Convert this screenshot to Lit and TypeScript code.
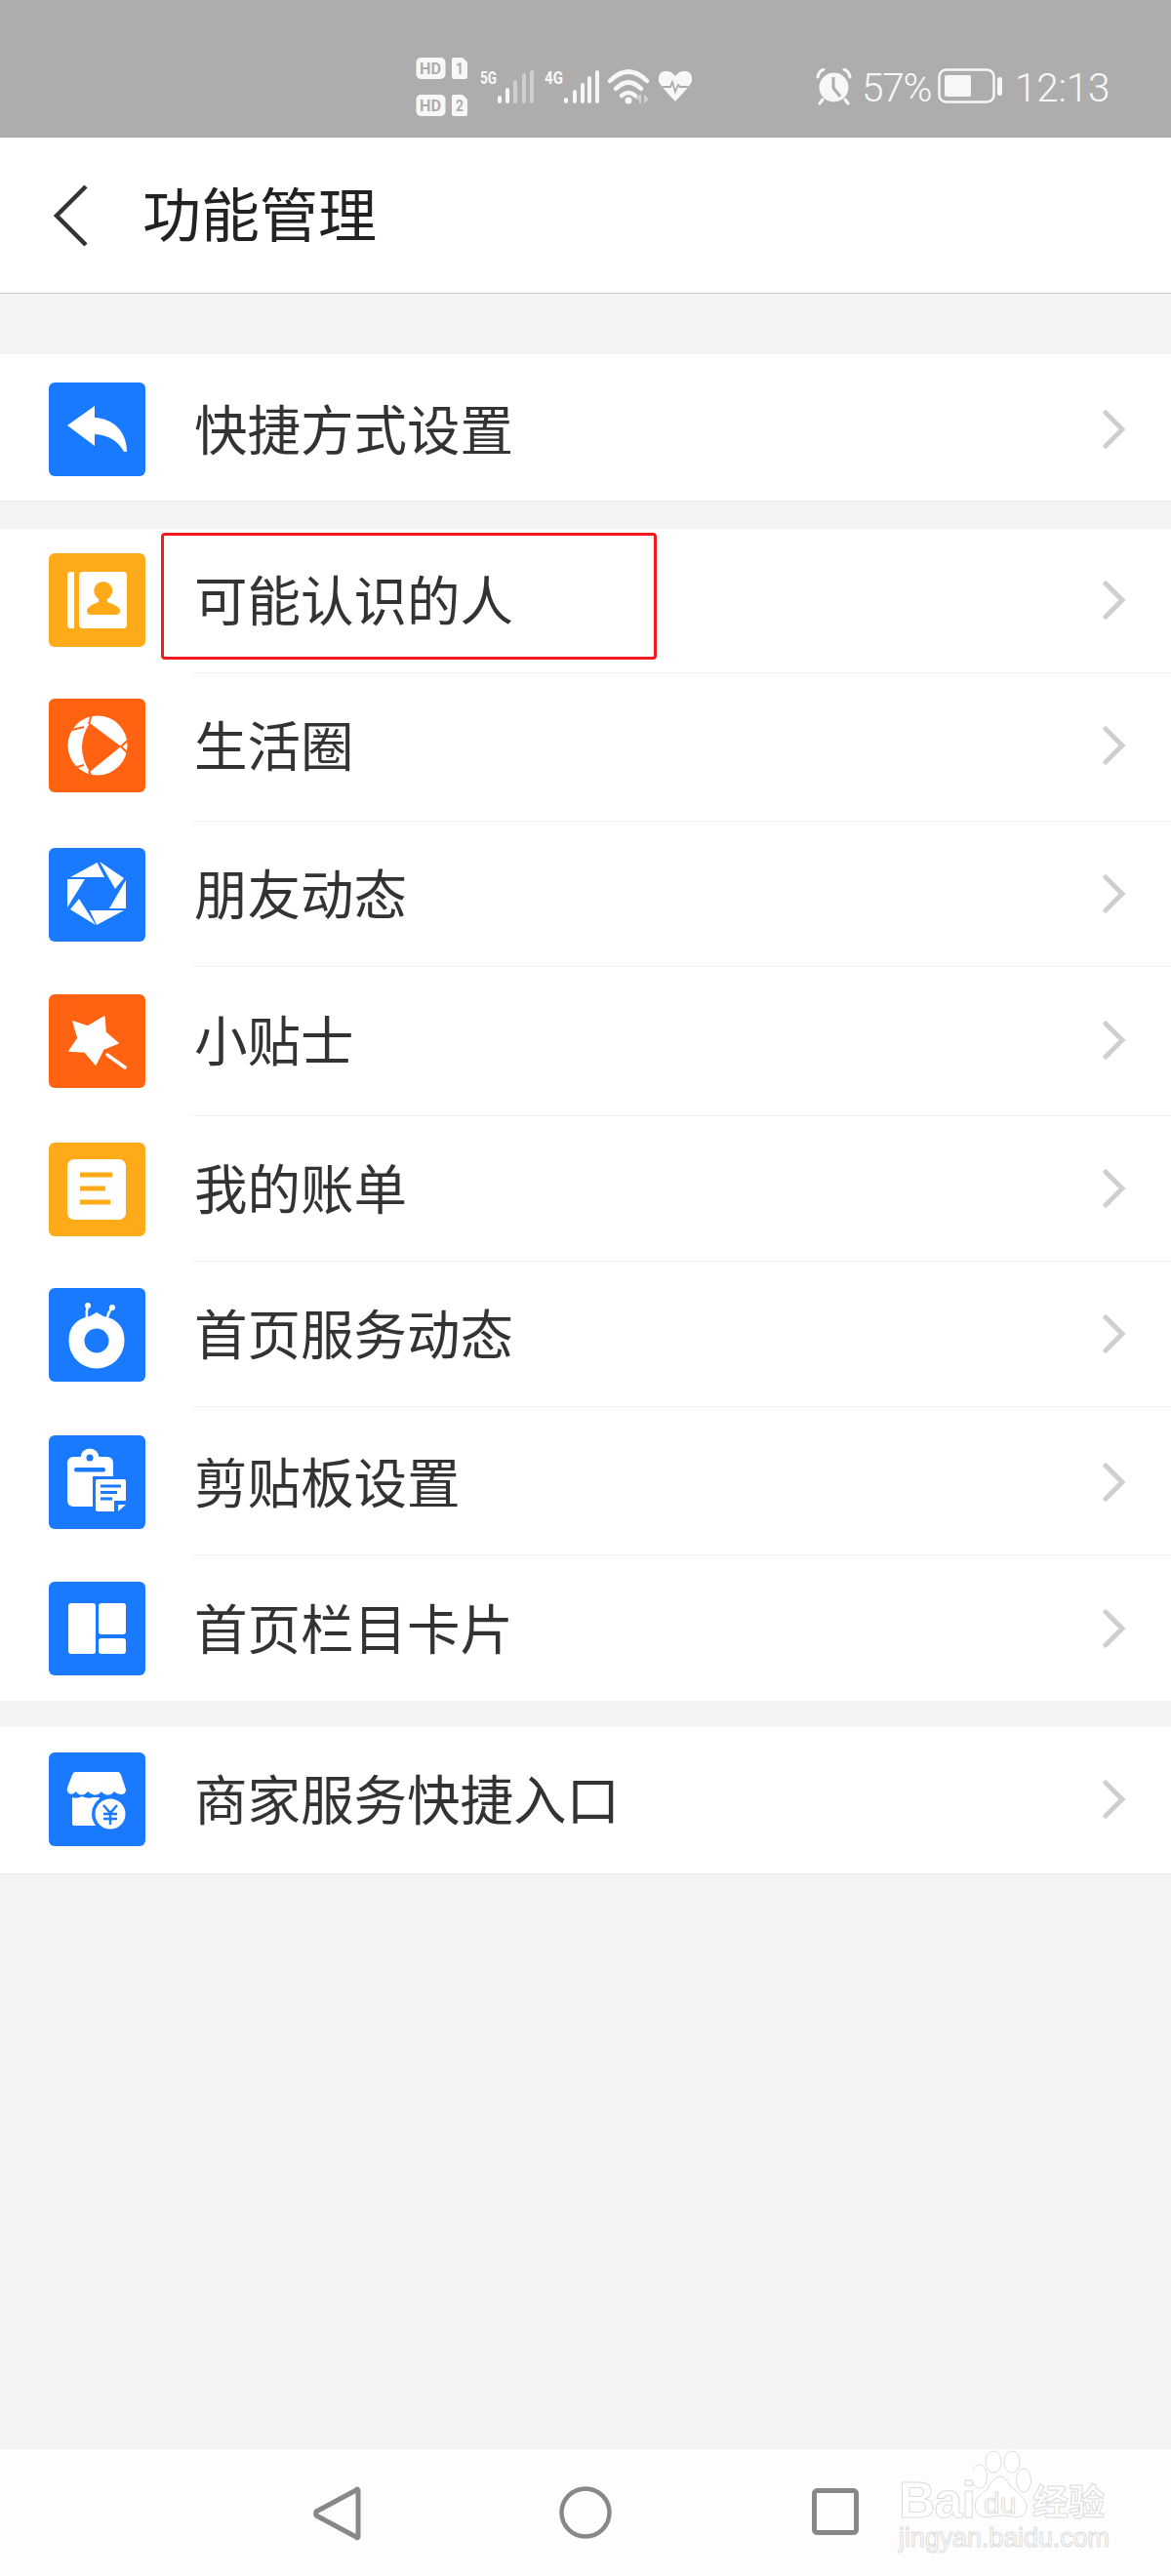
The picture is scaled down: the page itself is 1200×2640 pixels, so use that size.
import { LitElement, html, css, svg } from "lit";
import { customElement } from "lit/decorators.js";

const BLUE = "#1a7aff";
const ORANGE = "#ff6210";
const AMBER = "#ffaa19";

const icons: Record<string, unknown> = {
  reply: svg`<path fill="#fff" d="M19 44 L47 24 L47 36 C66 37 80 50 80 71 L77 71 C71 60 62 54 47 53 L47 65 Z"/>`,
  contacts: svg`<path fill="#fff" d="M26 19 V77 H23 Q19 77 19 73 V23 Q19 19 23 19 Z"/><rect fill="#fff" x="31" y="19" width="49" height="58" rx="4"/>
    <circle fill="${AMBER}" cx="55.7" cy="38.5" r="9.5"/><path fill="${AMBER}" d="M51 46 H60 V50 Q73 54 73 59 Q73 63 69 63 H43 Q39 63 39 59 Q39 54 51 50 Z"/>`,
  ball: svg`<circle fill="#fff" cx="50" cy="48" r="30.5"/><path fill="${ORANGE}" d="M42 25 L74 49 L42 75 Q26 50 42 25 Z"/>
    <path stroke="${ORANGE}" stroke-width="2" fill="none" d="M36 29 L24 32 M41 26 L44 16 M36 68 L26 71 M41 74 L44 81 M74 49 L83 41 M74 49 L82 57"/>`,
  aperture: svg`<g fill="#fff"><path d="M22 30 L49.5 15 L57 30 Z"/><path d="M52 14 L77 31 L68 42 Z"/><path d="M79 33 V62 H62 Z"/><path d="M77 64 L49 79 L42 64 Z"/><path d="M48 79 L22 63 L31 52 Z"/><path d="M19 61 V32 H37 Z"/></g>`,
  star: svg`<path fill="#fff" stroke="#fff" stroke-width="1.5" stroke-linejoin="round" d="M25 28 L40 33 L57 23 L58 39 L71 50 L56 56 L48 72 L37 59 L21 58 L30 45 Z"/><path stroke="#fff" stroke-width="3.5" stroke-linecap="round" d="M60 62 L78 75"/>`,
  bill: svg`<rect fill="#fff" x="19" y="17" width="60" height="62" rx="7"/><g fill="${AMBER}"><rect x="32" y="30.5" width="33" height="5"/><rect x="32" y="44.5" width="26" height="5"/><rect x="32" y="58.5" width="31" height="5"/></g>`,
  bug: svg`<path fill="#fff" d="M49 25 L56 29 Q77.5 33 77.5 54 A28.5 28.5 0 0 1 20.5 54 Q20.5 33 42 29 Z"/><circle fill="${BLUE}" cx="49" cy="54" r="12.5"/>
    <path stroke="#fff" stroke-width="2.5" fill="none" d="M39 30 Q38 24 40 19 M60 30 Q61 25 65 20"/><circle fill="#fff" cx="40" cy="18" r="3"/><circle fill="#fff" cx="65" cy="20" r="3"/>`,
  clip: svg`<rect fill="#fff" x="19" y="22" width="47" height="51" rx="6"/><circle fill="#fff" cx="42" cy="23" r="9.5"/><circle fill="${BLUE}" cx="42" cy="23" r="3.5"/><rect fill="${BLUE}" x="26" y="33" width="32" height="4.5" rx="2"/>
    <path fill="${BLUE}" d="M45 42 H82 V82 H45 Z"/><path fill="#fff" d="M48 47 Q48 45 50 45 H77 Q79 45 79 47 V67 H67 V78 H50 Q48 78 48 76 Z"/><path fill="#fff" d="M71 78 V71 H79 Z"/>
    <g fill="${BLUE}"><rect x="53" y="50.5" width="21" height="3"/><rect x="53" y="57" width="17" height="3"/><rect x="53" y="63.5" width="12" height="3"/></g>`,
  cards: svg`<g fill="#fff"><rect x="20" y="22" width="28" height="52" rx="3"/><rect x="51" y="22" width="28" height="32" rx="3"/><rect x="51" y="58" width="28" height="16" rx="3"/></g>`,
  shop: svg`<path fill="#fff" d="M27 20 H71 Q73 20 74 23 L79 38 Q79 43 74 43 Q70 43 67 40 Q63 45 58 43 Q55 42 54 40 Q50 45 45 43 Q42 42 40 40 Q36 45 31 43 Q29 42 28 40 Q24 44 21 42 Q18 40 19 36 L24 23 Q25 20 27 20 Z"/>
    <path fill="#fff" d="M24 46 Q29 48 34 45 Q40 48 45 46 L52 46 V75 H26 Q24 75 24 73 Z"/><circle fill="${BLUE}" cx="63" cy="63" r="19"/><circle fill="#fff" cx="63" cy="63" r="15.5"/>
    <path stroke="${BLUE}" stroke-width="2.5" fill="none" d="M56 54 L63 62 L70 54 M56 63 H70 M56 68 H70 M63 62 V74"/>`,
};

type Row = { icon: string; bg: string; label: string; h: number; s: number; box?: boolean };

const rows1: Row[] = [{ icon: "reply", bg: BLUE, label: "快捷方式设置", h: 150, s: 2 }];
const rows2: Row[] = [
  { icon: "contacts", bg: AMBER, label: "可能认识的人", h: 148, s: -1, box: true },
  { icon: "ball", bg: ORANGE, label: "生活圈", h: 152, s: -2 },
  { icon: "aperture", bg: BLUE, label: "朋友动态", h: 149, s: 0 },
  { icon: "star", bg: ORANGE, label: "小贴士", h: 153, s: -1 },
  { icon: "bill", bg: AMBER, label: "我的账单", h: 149, s: 0 },
  { icon: "bug", bg: BLUE, label: "首页服务动态", h: 149, s: 0 },
  { icon: "clip", bg: BLUE, label: "剪贴板设置", h: 152, s: 1 },
  { icon: "cards", bg: BLUE, label: "首页栏目卡片", h: 149, s: 0 },
];
const rows3: Row[] = [{ icon: "shop", bg: BLUE, label: "商家服务快捷入口", h: 150, s: -1 }];

@customElement("app-root")
export class AppRoot extends LitElement {
  static styles = css`
    :host {
      display: flex;
      flex-direction: column;
      width: 1200px;
      height: 2640px;
      background: #f4f4f4;
      font-family: "Noto Sans CJK SC", "Noto Sans", sans-serif;
      position: relative;
      overflow: hidden;
    }
    .status {
      height: 141px;
      flex: none;
      background: #adadad;
      display: flex;
      align-items: flex-start;
      color: #f7f7f7;
      font-family: Roboto, sans-serif;
      font-weight: 300;
    }
    .signals { margin: 56px 0 0 426px; flex: none; display: block; }
    .alarm { margin: 70px 0 0 120px; flex: none; display: block; }
    .pct { margin: 64px 0 0 10px; font-size: 40.5px; line-height: 52px; width: 74px; letter-spacing: -1.2px; }
    .batt { margin: 70px 0 0 4px; flex: none; display: block; }
    .time { margin: 64px 0 0 11px; font-size: 40.5px; line-height: 52px; letter-spacing: -0.2px; }
    .header {
      height: 159px;
      flex: none;
      background: #fff;
      border-bottom: 1px solid #c9c9c9;
      display: flex;
      align-items: center;
    }
    .back { margin-left: 52px; flex: none; display: block; }
    .title { margin: 0 0 8px 49px; font-size: 60px; color: #222; line-height: 80px; }
    .section {
      background: #fff;
      border-bottom: 1px solid #ececec;
      flex: none;
    }
    .s1 { margin-top: 62px; }
    .s2 { margin-top: 28px; border-bottom: none; }
    .s3 { margin-top: 27px; }
    .row {
      display: flex;
      align-items: stretch;
      position: relative;
    }
    .icon {
      flex: none;
      width: 99px;
      height: 96px;
      margin: auto 49px auto 50px;
      border-radius: 6px;
      display: block;
      transform: translateY(var(--s));
    }
    .body {
      flex: 1;
      display: flex;
      align-items: center;
      justify-content: space-between;
      padding: 0 46px 0 1px;
      min-width: 0;
    }
    .sep { border-bottom: 1px solid #efefef; }
    .label { font-size: 54.5px; color: #333; line-height: 72px; transform: translateY(calc(var(--s) - 2px)); }
    .chev { display: block; flex: none; transform: translateY(var(--s)); }
    .box {
      position: absolute;
      left: 165px;
      top: 4px;
      width: 508px;
      height: 130px;
      box-sizing: border-box;
      border: 3px solid #f5181c;
      border-radius: 4px;
    }
    .spacer { flex: 1; }
    .nav {
      height: 130px;
      flex: none;
      background: #fdfdfd;
      display: flex;
      align-items: flex-start;
    }
    .nav svg { display: block; flex: none; }
    .n1 { margin: 36px 0 0 319px; }
    .n2 { margin: 36px 0 0 200px; }
    .n3 { margin: 39px 0 0 202px; }
    .mark {
      position: absolute;
      left: 921px;
      top: 2510px;
      width: 220px;
      height: 110px;
      color: #fff;
      -webkit-text-stroke: 1px #dcdcdc;
      font-family: "Liberation Sans", sans-serif;
    }
    .mark svg { position: absolute; left: 76px; top: 0; display: block; }
    .mark span { position: absolute; white-space: nowrap; }
    .bai { left: 0; top: 26px; font-size: 52px; line-height: 52px; font-weight: 700; letter-spacing: -1px; }
    .du { left: 87px !important; top: 41px; font-size: 30px; line-height: 30px; }
    .cn { left: 137px; top: 32px; font-size: 37px; line-height: 40px; font-weight: 700; font-family: "Noto Sans CJK SC", sans-serif; }
    .url { left: 0; top: 76px; font-size: 27px; line-height: 30px; letter-spacing: -0.1px; }
  `;

  private chev() {
    return html`<svg class="chev" width="24" height="40" viewBox="0 0 24 40"><path d="M3 3 L20 20 L3 37" fill="none" stroke="#cfcfcf" stroke-width="5" stroke-linecap="round" stroke-linejoin="miter"/></svg>`;
  }

  private row(r: Row, sep: boolean) {
    return html`<div class="row" style="height:${r.h}px;--s:${r.s}px">
      <svg class="icon" style="background:${r.bg}" viewBox="0 0 99 96" width="99" height="96">${icons[r.icon]}</svg>
      <div class="body ${sep ? "sep" : ""}">
        <span class="label">${r.label}</span>
        ${this.chev()}
      </div>
      ${r.box ? html`<div class="box"></div>` : ""}
    </div>`;
  }

  private signals() {
    const bar = (x: number, y: number, o = 1) => svg`<rect x="${x}" y="${y}" width="4" height="${50 - y}" rx="2" fill="#f7f7f7" opacity="${o}"/>`;
    return html`<svg class="signals" width="290" height="70" viewBox="0 0 290 70" font-family="Roboto, sans-serif" fill="#f7f7f7">
      <rect x="0.5" y="3" width="30" height="22" rx="5"/><text x="4" y="20" font-size="16" font-weight="700" fill="#adadad" textLength="22" lengthAdjust="spacingAndGlyphs">HD</text>
      <path d="M37 5 Q37 3 39 3 H48 L53 8 V23 Q53 25 51 25 H39 Q37 25 37 23 Z"/><text x="41" y="20" font-size="16" font-weight="700" fill="#adadad" textLength="8" lengthAdjust="spacingAndGlyphs">1</text>
      <rect x="0.5" y="41" width="30" height="22" rx="5"/><text x="4" y="58" font-size="16" font-weight="700" fill="#adadad" textLength="22" lengthAdjust="spacingAndGlyphs">HD</text>
      <path d="M37 43 Q37 41 39 41 H48 L53 46 V61 Q53 63 51 63 H39 Q37 63 37 61 Z"/><text x="41" y="58" font-size="16" font-weight="700" fill="#adadad" textLength="8" lengthAdjust="spacingAndGlyphs">2</text>
      <text x="66" y="30" font-size="19" font-weight="700" textLength="17" lengthAdjust="spacingAndGlyphs">5G</text>
      ${bar(84, 42)}${bar(92, 34)}${bar(100, 26, 0.45)}${bar(109, 19, 0.45)}${bar(117, 16, 0.45)}
      <text x="132" y="30" font-size="19" font-weight="700" textLength="19" lengthAdjust="spacingAndGlyphs">4G</text>
      ${bar(152, 44)}${bar(161, 36)}${bar(169, 29)}${bar(176, 22)}${bar(184, 16)}
      <g fill="none" stroke="#f7f7f7" stroke-width="4.5" stroke-linecap="round">
        <path d="M199 27 Q218 8 237 27"/><path d="M205 35 Q218 22 231 35"/><path d="M211 42 Q218 36 225 42"/>
      </g>
      <circle cx="218" cy="47" r="3.5"/>
      <path d="M229 41 L225 46 H229 V50 H231 V41 Z M234 50 V41 L239 45.5 Z" opacity="0.5"/>
      <path d="M266 48 Q249 30 249 27 C248 18 253 17 257 17 C261 17 264 19 266 22 C268 19 271 17 275 17 C279 17 284 18 283 27 Q283 30 266 48 Z"/>
      <path d="M253 33 H261 L263 28 L266 38 L269 31 L271 33 H279" fill="none" stroke="#adadad" stroke-width="1.8"/>
    </svg>`;
  }

  render() {
    return html`
      <div class="status">
        ${this.signals()}
        <svg class="alarm" width="37" height="38" viewBox="0 0 37 38" fill="#f7f7f7">
          <circle cx="18.5" cy="19.5" r="15"/>
          <path d="M18 9 V20 L25 29" fill="none" stroke="#adadad" stroke-width="3"/>
          <path d="M2 9 Q3 3 8 1 M35 9 Q34 3 29 1 M7 32 L4 36 M30 32 L33 36" fill="none" stroke="#f7f7f7" stroke-width="3" stroke-linecap="round"/>
        </svg>
        <div class="pct">57%</div>
        <svg class="batt" width="68" height="36" viewBox="0 0 68 36" fill="#f7f7f7">
          <rect x="1.5" y="1.5" width="56" height="33" rx="7" fill="none" stroke="#f7f7f7" stroke-width="2.5"/>
          <rect x="7" y="7" width="27" height="22" rx="2"/>
          <rect x="61" y="9" width="5" height="19" rx="2.5"/>
        </svg>
        <div class="time">12:13</div>
      </div>
      <div class="header">
        <svg class="back" width="45" height="64" viewBox="0 0 45 64"><path d="M36 2 L6 32 L36 62" fill="none" stroke="#333" stroke-width="4.5"/></svg>
        <div class="title">功能管理</div>
      </div>
      <div class="section s1">${rows1.map((r) => this.row(r, false))}</div>
      <div class="section s2">${rows2.map((r, i) => this.row(r, i < rows2.length - 1))}</div>
      <div class="section s3">${rows3.map((r) => this.row(r, false))}</div>
      <div class="spacer"></div>
      <div class="nav">
        <svg class="n1" width="52" height="60" viewBox="0 0 52 60"><path d="M46 6 Q47 4 48 6 V54 Q47 56 46 54 L5 32 Q4 30 5 28 Z" fill="none" stroke="#888" stroke-width="5" stroke-linejoin="round"/></svg>
        <svg class="n2" width="58" height="60" viewBox="0 0 58 60"><circle cx="29" cy="29" r="24.5" fill="none" stroke="#888" stroke-width="4.5"/></svg>
        <svg class="n3" width="50" height="50" viewBox="0 0 50 50"><rect x="3.5" y="3.5" width="43" height="43" rx="3" fill="none" stroke="#888" stroke-width="5"/></svg>
      </div>
      <div class="mark">
        <span class="bai">Bai</span>
        <svg width="64" height="74" viewBox="0 0 64 74" fill="#fff" stroke="#dcdcdc" stroke-width="1">
          <ellipse cx="6.5" cy="28" rx="8" ry="12"/>
          <ellipse cx="21" cy="13" rx="8" ry="11"/>
          <ellipse cx="40" cy="13" rx="8" ry="11"/>
          <ellipse cx="52" cy="32" rx="7.5" ry="12"/>
          <path d="M27 28 Q34 28 38 38 Q48 44 55 56 Q56 70 44 70 Q30 66 16 70 Q2 70 2 56 Q6 46 14 42 Q20 30 27 28 Z"/>
        </svg>
        <span class="du">du</span>
        <span class="cn">经验</span>
        <span class="url">jingyan.baidu.com</span>
      </div>
    `;
  }
}
